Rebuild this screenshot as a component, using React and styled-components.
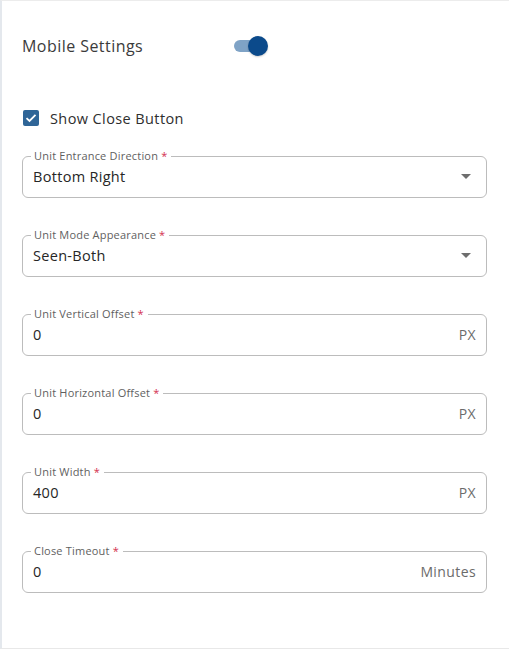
import React from "react";
import styled, { createGlobalStyle } from "styled-components";

const Global = createGlobalStyle`
  html, body { margin: 0; padding: 0; background: #fff; }
  body { font-family: "Open Sans", "Liberation Sans", sans-serif; }
  * { box-sizing: border-box; }
`;

const Page = styled.div`
  width: 509px;
  height: 649px;
  border-top: 1px solid #ececec;
  border-left: 2px solid #e4e8ed;
  border-bottom: 1px solid #e8e8e8;
  padding: 33px 22px 0 20px;
  display: flex;
  flex-direction: column;
`;

const TitleRow = styled.div`
  height: 24px;
  display: flex;
  align-items: center;
`;

const Title = styled.div`
  width: 212px;
  font-size: 16px;
  color: #3b3b3b;
  letter-spacing: 0.45px;
`;

const Switch = styled.div`
  position: relative;
  width: 34px;
  height: 24px;
  display: flex;
  align-items: center;
`;

const Track = styled.div`
  width: 30px;
  height: 12px;
  border-radius: 6px;
  background: #7fa3c6;
`;

const Thumb = styled.div`
  position: absolute;
  left: 14px;
  top: 2px;
  width: 20px;
  height: 20px;
  border-radius: 50%;
  background: #0b4a8b;
  box-shadow: 0 1px 2px rgba(0, 0, 0, 0.2);
`;

const CheckRow = styled.label`
  margin-top: 50px;
  height: 20px;
  display: flex;
  align-items: center;
  gap: 11px;
  font-size: 14.5px;
  letter-spacing: 0.4px;
  color: #2e2e2e;
`;

const Box = styled.span`
  margin-left: 1px;
  width: 16px;
  height: 16px;
  border-radius: 2px;
  background: #2f6597;
  display: flex;
  align-items: center;
  justify-content: center;
`;

const Fields = styled.div`
  margin-top: 28px;
  display: flex;
  flex-direction: column;
  gap: 37px;
`;

const Field = styled.div`
  position: relative;
  height: 42px;
  border: 1px solid #bcbcbc;
  border-radius: 6px;
  padding: 0 10px 1px 10px;
  display: flex;
  align-items: center;
`;

const Label = styled.span`
  position: absolute;
  left: 8px;
  top: -8px;
  padding: 0 4px 0 3px;
  background: #fff;
  font-size: 11px;
  line-height: 14px;
  letter-spacing: 0.2px;
  color: #5f5f5f;
`;

const Req = styled.span`
  color: #d32f4f;
  margin-left: 3px;
`;

const Value = styled.span`
  flex: 1;
  font-size: 14.5px;
  letter-spacing: 0.3px;
  color: #262626;
`;

const Adornment = styled.span`
  font-size: 14px;
  letter-spacing: 0.4px;
  color: #6b6b6b;
`;

const Arrow = styled.span`
  width: 0;
  height: 0;
  margin-right: 5px;
  border-left: 5px solid transparent;
  border-right: 5px solid transparent;
  border-top: 5px solid #6e6e6e;
`;

const fields = [
  { label: "Unit Entrance Direction", value: "Bottom Right", select: true },
  { label: "Unit Mode Appearance", value: "Seen-Both", select: true },
  { label: "Unit Vertical Offset", value: "0", unit: "PX" },
  { label: "Unit Horizontal Offset", value: "0", unit: "PX" },
  { label: "Unit Width", value: "400", unit: "PX" },
  { label: "Close Timeout", value: "0", unit: "Minutes" },
];

export default function App() {
  return (
    <>
      <Global />
      <Page>
        <TitleRow>
          <Title>Mobile Settings</Title>
          <Switch>
            <Track />
            <Thumb />
          </Switch>
        </TitleRow>
        <CheckRow>
          <Box>
            <svg width="12" height="10" viewBox="0 0 12 10">
              <path d="M1.5 5.2 L4.5 8 L10.5 1.8" fill="none" stroke="#fff" strokeWidth="1.8" />
            </svg>
          </Box>
          Show Close Button
        </CheckRow>
        <Fields>
          {fields.map((f) => (
            <Field key={f.label}>
              <Label>
                {f.label}
                <Req>*</Req>
              </Label>
              <Value>{f.value}</Value>
              {f.select ? <Arrow /> : <Adornment>{f.unit}</Adornment>}
            </Field>
          ))}
        </Fields>
      </Page>
    </>
  );
}
